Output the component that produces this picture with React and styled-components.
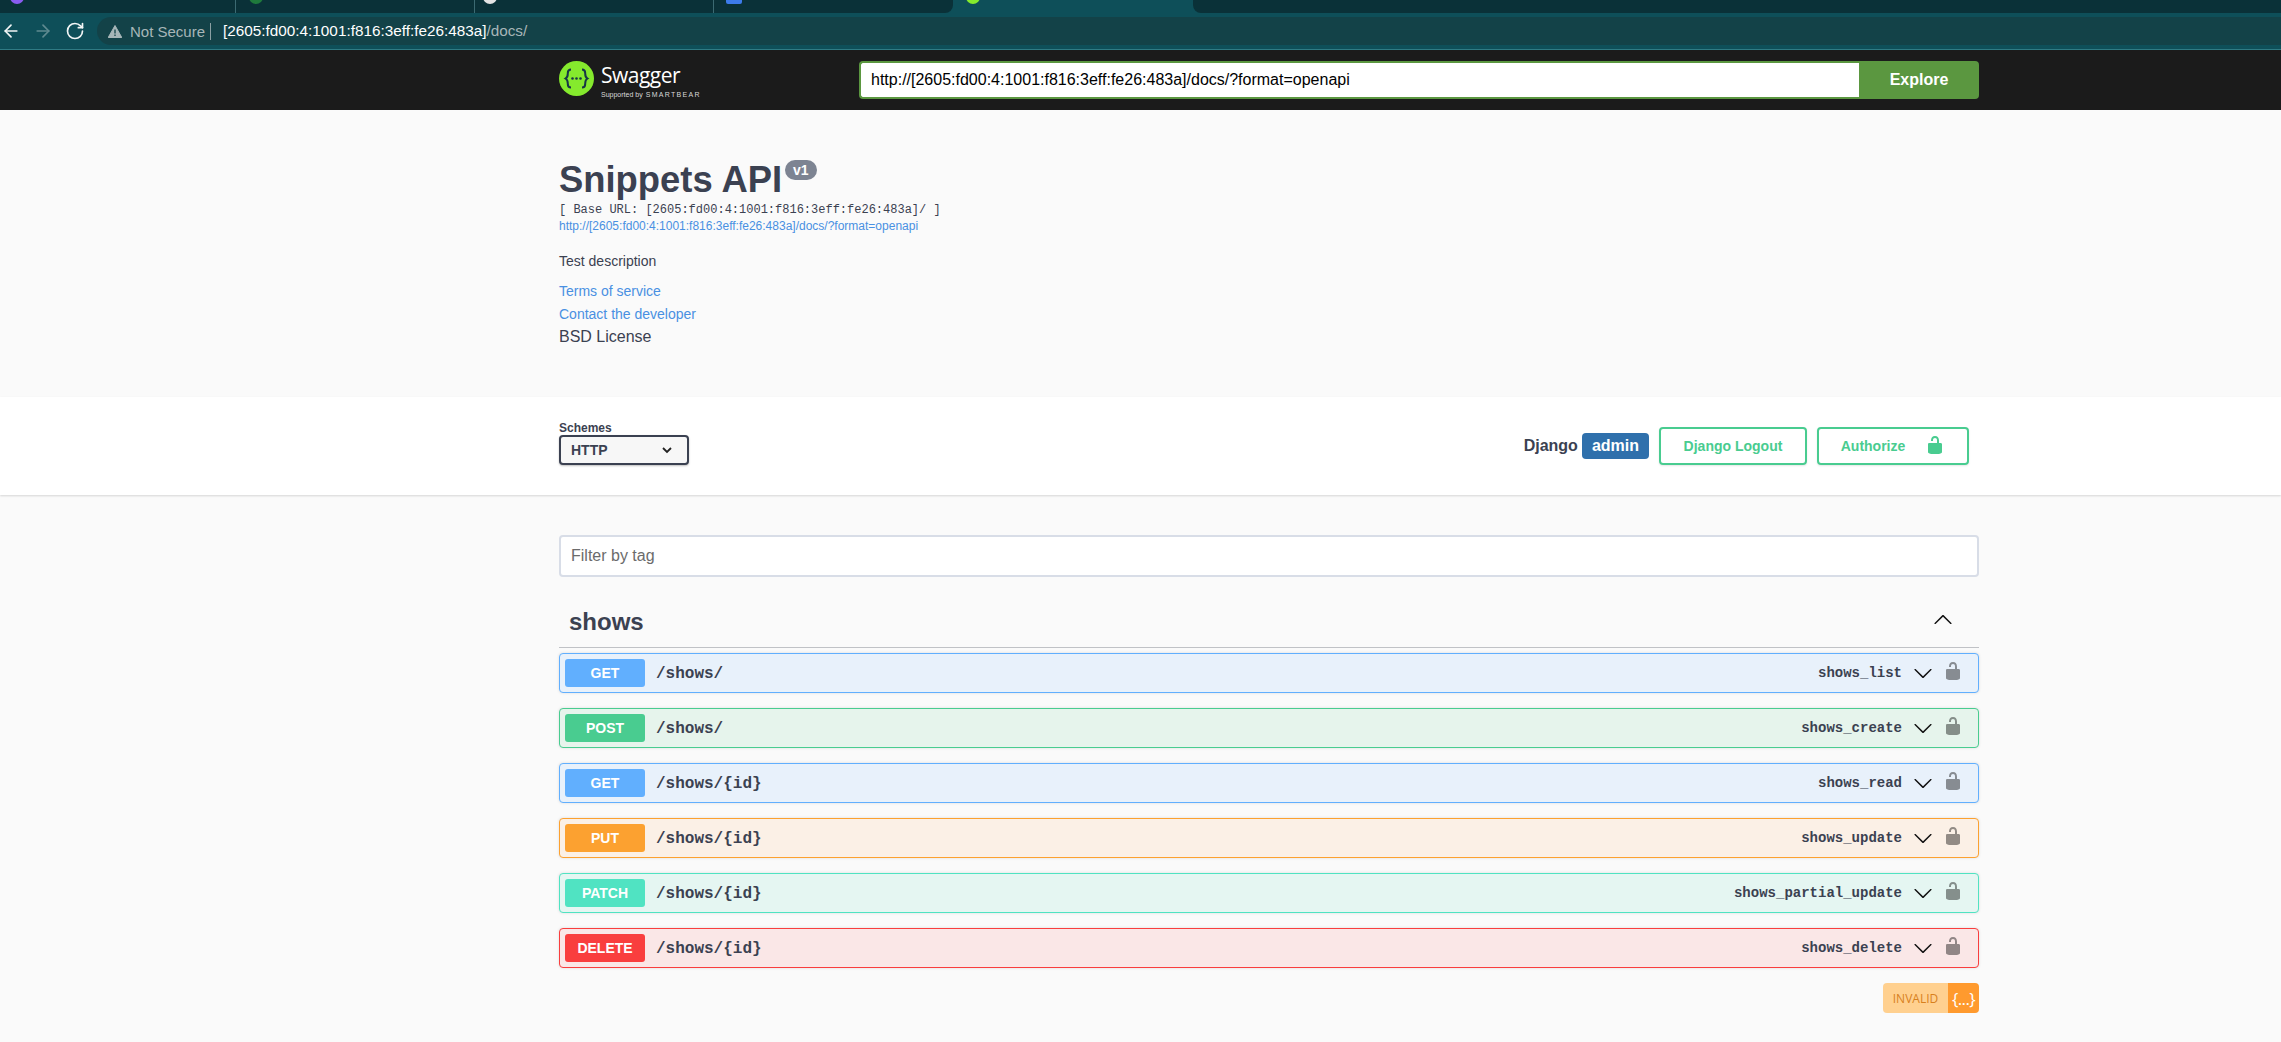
import styled, { createGlobalStyle } from 'styled-components'
import { ArrowLeft, ArrowRight, RotateCw } from 'lucide-react'

const GlobalStyle = createGlobalStyle`
  html, body {
    margin: 0;
    padding: 0;
    background: #fafafa;
    font-family: "Liberation Sans", Arial, sans-serif;
    color: #3b4151;
  }
`

const Page = styled.div`
  width: 2281px;
  height: 1042px;
  overflow: hidden;
  display: flex;
  flex-direction: column;
`

const TabStrip = styled.div`
  height: 17px;
  background: #0e4f59;
  display: flex;
  flex: none;
`
const TabGroup = styled.div`
  width: ${(p) => p.$width}px;
  height: 13px;
  background: #0a3138;
  border-radius: ${(p) => (p.$side === 'left' ? '0 0 8px 0' : '0 0 0 8px')};
  display: flex;
  flex: none;
`
const ActiveTab = styled.div`
  width: 240px;
  flex: none;
  padding-left: 13px;
  height: 13px;
  overflow: hidden;
  box-sizing: border-box;
`
const Tab = styled.div`
  width: ${(p) => p.$width}px;
  height: 13px;
  flex: none;
  box-sizing: border-box;
  padding-left: ${(p) => p.$pad}px;
  border-right: ${(p) => (p.$last ? 'none' : '1px solid #3c6a72')};
  overflow: hidden;
`
const Favicon = styled.span`
  display: block;
  width: ${(p) => (p.$square ? 16 : 14)}px;
  height: ${(p) => (p.$square ? 11 : 14)}px;
  margin-top: ${(p) => (p.$square ? -7 : -10)}px;
  border-radius: ${(p) => (p.$square ? '2px' : '50%')};
  background: ${(p) => p.$color};
`
const BrowserBar = styled.div`
  height: 32px;
  flex: none;
  background: #0e4f59;
  border-bottom: 1px solid #2f7b84;
  display: flex;
  align-items: flex-start;
`
const NavIcons = styled.div`
  display: flex;
  align-items: center;
  gap: 12px;
  padding-left: 1px;
  width: 96px;
  height: 28px;
  flex: none;
  color: #f2f6f6;
`
const ForwardIcon = styled(ArrowRight)`
  color: #5f8a90;
`
const Omnibox = styled.div`
  flex: 1;
  height: 28px;
  background: #134248;
  border-radius: 14px 0 0 14px;
  display: flex;
  align-items: center;
  padding-left: 11px;
`
const NotSecure = styled.span`
  color: #a7b6b8;
  font-size: 15px;
  margin-left: 8px;
  padding-right: 5px;
  border-right: 1px solid #8ba0a3;
  line-height: 17px;
`
const Host = styled.span`
  color: #ffffff;
  font-size: 15.300px;
  margin-left: 12px;
`
const Path = styled.span`
  color: #a7b6b8;
  font-size: 15.300px;
`

const TopBar = styled.div`
  height: 60px;
  flex: none;
  background: #1b1b1b;
`
const Wrapper = styled.div`
  width: 1420px;
  margin-left: 559px;
`
const TopInner = styled(Wrapper)`
  height: 60px;
  display: flex;
  align-items: center;
`
const Logo = styled.div`
  width: 300px;
  flex: none;
  align-self: flex-start;
  margin-top: 11px;
  display: flex;
  align-items: flex-start;
  gap: 7px;
`
const LogoText = styled.div`
  display: flex;
  flex-direction: column;
  color: #ffffff;
  margin-top: 2px;
`
const LogoWord = styled.span`
  font-family: "Open Sans", sans-serif;
  font-size: 21px;
  line-height: 25px;
  letter-spacing: -0.5px;
`
const LogoSub = styled.span`
  font-size: 7px;
  line-height: 9px;
  margin-top: 2px;
  color: #d8d8d8;
  white-space: nowrap;
  b {
    font-size: 7px;
    font-weight: 400;
    letter-spacing: 1.300px;
    margin-left: 3px;
  }
`
const UrlForm = styled.div`
  flex: 1;
  height: 38px;
  display: flex;
`
const UrlInput = styled.div`
  flex: 1;
  box-sizing: border-box;
  background: #ffffff;
  border: 2px solid #5b9740;
  border-right: none;
  border-radius: 4px 0 0 4px;
  font-size: 16px;
  color: #000000;
  display: flex;
  align-items: center;
  padding-left: 10px;
`
const ExploreButton = styled.div`
  width: 120px;
  flex: none;
  background: #5b9740;
  border-radius: 0 4px 4px 0;
  color: #ffffff;
  font-size: 16px;
  font-weight: 700;
  display: flex;
  align-items: center;
  justify-content: center;
`

const Info = styled(Wrapper)`
  height: 287px;
  flex: none;
  box-sizing: border-box;
  padding-top: 47px;
`
const Title = styled.h2`
  margin: 0;
  font-size: 36.400px;
  line-height: 46px;
  font-weight: 700;
  position: relative;
  display: inline-block;
`
const Version = styled.span`
  position: absolute;
  left: 226px;
  top: 3px;
  background: #7d8492;
  color: #ffffff;
  font-size: 14px;
  line-height: 20px;
  height: 20px;
  padding: 0 8px;
  border-radius: 10px;
`
const BaseUrl = styled.pre`
  margin: 0;
  font-family: "Liberation Mono", monospace;
  font-size: 12px;
  line-height: 14px;
  color: #3b4151;
`
const SmallLink = styled.div`
  font-size: 12px;
  line-height: 18px;
  color: #4990e2;
`
const Description = styled.p`
  margin: 17px 0 0;
  font-size: 14px;
  line-height: 18px;
`
const InfoLink = styled.div`
  font-size: 14px;
  line-height: 23px;
  color: #4990e2;
  margin-top: ${(p) => p.$top || 0}px;
`
const License = styled.div`
  font-size: 16px;
  line-height: 22px;
  color: #3b4151;
`

const SchemeBar = styled.div`
  height: 98px;
  flex: none;
  background: #ffffff;
  box-shadow: 0 1px 2px rgba(0, 0, 0, 0.15);
  position: relative;
`
const SchemeInner = styled(Wrapper)`
  height: 98px;
  box-sizing: border-box;
  padding: 24px 10px 0 0;
  display: flex;
  justify-content: space-between;
`
const SchemeCol = styled.div`
  display: flex;
  flex-direction: column;
`
const SchemeLabel = styled.span`
  font-size: 12px;
  line-height: 14px;
  font-weight: 700;
`
const SchemeSelect = styled.div`
  width: 130px;
  height: 30px;
  box-sizing: border-box;
  border: 2px solid #3b4151;
  border-radius: 4px;
  background: #f7f7f7;
  box-shadow: 0 1px 2px rgba(0, 0, 0, 0.25);
  font-size: 14px;
  font-weight: 700;
  display: flex;
  align-items: center;
  justify-content: space-between;
  padding: 0 15px 0 10px;
`
const AuthRow = styled.div`
  display: flex;
  align-items: center;
  margin-top: 6px;
  height: 38px;
`
const DjangoLabel = styled.span`
  font-size: 16px;
  font-weight: 700;
  margin-right: 4px;
`
const AdminBadge = styled.span`
  background: #2f70ac;
  color: #ffffff;
  border-radius: 4px;
  font-size: 16px;
  font-weight: 700;
  height: 26px;
  line-height: 26px;
  padding: 0 10px;
  margin-right: 10px;
`
const AuthButton = styled.div`
  height: 38px;
  width: ${(p) => p.$width}px;
  box-sizing: border-box;
  border: 2px solid #49cc90;
  border-radius: 4px;
  box-shadow: 0 1px 2px rgba(0, 0, 0, 0.1);
  color: #49cc90;
  font-size: 14px;
  font-weight: 700;
  display: flex;
  align-items: center;
  justify-content: center;
  gap: 20px;
  margin-left: ${(p) => p.$left || 0}px;
`

const Content = styled(Wrapper)`
  flex: 1;
`
const FilterInput = styled.div`
  margin-top: 40px;
  height: 42px;
  box-sizing: border-box;
  border: 2px solid #d8dde7;
  border-radius: 4px;
  background: #ffffff;
  display: flex;
  align-items: center;
  padding-left: 10px;
  font-size: 16px;
  color: #6b6b6b;
`
const TagHeader = styled.div`
  height: 56px;
  margin-top: 15px;
  box-sizing: border-box;
  border-bottom: 1px solid rgba(59, 65, 81, 0.3);
  display: flex;
  align-items: center;
  justify-content: space-between;
  padding: 0 26px 0 10px;
`
const TagName = styled.h3`
  margin: 5px 0 0;
  font-size: 24px;
  font-weight: 700;
`
const OpList = styled.div`
  display: flex;
  flex-direction: column;
  gap: 15px;
  margin-top: 5px;
`
const OpRow = styled.div`
  height: 40px;
  box-sizing: border-box;
  border: 1px solid ${(p) => p.$color};
  border-radius: 4px;
  background: ${(p) => p.$bg};
  box-shadow: 0 0 3px rgba(0, 0, 0, 0.12);
  display: flex;
  align-items: center;
  padding: 0 15px 0 5px;
`
const MethodBadge = styled.span`
  width: 80px;
  height: 28px;
  flex: none;
  background: ${(p) => p.$color};
  border-radius: 3px;
  color: #ffffff;
  font-size: 14px;
  font-weight: 700;
  display: flex;
  align-items: center;
  justify-content: center;
`
const OpPath = styled.span`
  font-family: "Liberation Mono", monospace;
  font-size: 16px;
  font-weight: 700;
  margin-left: 11px;
  padding-top: 2px;
  flex: 1;
`
const OpId = styled.span`
  font-family: "Liberation Mono", monospace;
  font-size: 14px;
  font-weight: 700;
`
const ArrowSlot = styled.span`
  display: flex;
  margin: 0 10px 0 11px;
`
const BadgeRow = styled.div`
  display: flex;
  justify-content: flex-end;
  margin-top: 15px;
`
const Invalid = styled.div`
  height: 30px;
  display: flex;
  border-radius: 4px;
  overflow: hidden;
`
const InvalidLabel = styled.span`
  width: 65px;
  background: #ffd08f;
  color: #d8801d;
  font-family: "Open Sans", sans-serif;
  font-size: 12px;
  display: flex;
  align-items: center;
  justify-content: center;
`
const InvalidIcon = styled.span`
  width: 31px;
  background: #ff9a2e;
  color: #ffffff;
  font-family: "Open Sans", sans-serif;
  font-size: 17px;
  letter-spacing: -0.6px;
  display: flex;
  align-items: center;
  justify-content: center;
`
const LockSvg = styled.svg`
  flex: none;
  margin-bottom: ${(p) => p.$lift}px;
`

const ARROW_PATH =
  'M17.418 6.109c.272-.268.709-.268.979 0s.271.701 0 .969l-7.908 7.83c-.27.268-.707.268-.979 0l-7.908-7.83c-.27-.268-.27-.701 0-.969.271-.268.709-.268.979 0L10 13.25l7.418-7.141z'

const LOCK_PATH =
  'M15.8 8H14V5.6C14 2.703 12.665 1 10 1 7.334 1 6 2.703 6 5.6V6h2v-.801C8 3.754 8.797 3 10 3c1.203 0 2 .754 2 2.199V8H4c-.553 0-1 .646-1 1.199V17c0 .549.428 1.139.951 1.307l1.197.387C5.672 18.861 6.55 19 7.1 19h5.8c.549 0 1.428-.139 1.951-.307l1.196-.387c.524-.167.953-.757.953-1.306V9.199C17 8.646 16.352 8 15.8 8z'

const Lock = ({ color, lift = 0 }) => (
  <LockSvg width="20" height="20" viewBox="0 0 20 20" fill={color} $lift={lift}>
    <path d={LOCK_PATH} />
  </LockSvg>
)

const Chevron = ({ up }) => (
  <svg width="20" height="20" viewBox="0 0 20 20" fill="#111">
    <path d={ARROW_PATH} transform={up ? 'rotate(180 10 10)' : undefined} />
  </svg>
)

const SmallChevron = () => (
  <svg width="10" height="7" viewBox="0 0 10 7" fill="none" stroke="#222" strokeWidth="1.8">
    <path d="M1 1l4 4 4-4" />
  </svg>
)

const WarningIcon = () => (
  <svg width="14" height="13" viewBox="0 0 14 13">
    <path d="M7 .5l6.800 12H.2z" fill="#a7b6b8" stroke="#a7b6b8" strokeLinejoin="round" />
    <path d="M7 4.500v4M7 9.600v1.300" stroke="#134248" strokeWidth="1.300" />
  </svg>
)

const LogoMark = () => (
  <svg width="35" height="35" viewBox="0 0 35 35">
    <circle cx="17.5" cy="17.5" r="17.5" fill="#85ea2d" />
    <path
      d="M12 8.5c-3 0-3.200 1.600-3.200 3.600 0 2.400.1 4-2.300 5.400 2.400 1.400 2.300 3 2.300 5.400 0 2 .2 3.600 3.200 3.600M23 8.500c3 0 3.200 1.600 3.200 3.600 0 2.400-.1 4 2.300 5.400-2.400 1.400-2.300 3-2.300 5.400 0 2-.2 3.600-3.200 3.600"
      fill="none"
      stroke="#173647"
      strokeWidth="2"
    />
    <circle cx="13.500" cy="17.500" r="1.300" fill="#173647" />
    <circle cx="17.500" cy="17.500" r="1.300" fill="#173647" />
    <circle cx="21.500" cy="17.500" r="1.300" fill="#173647" />
  </svg>
)

const operations = [
  { method: 'GET', path: '/shows/', id: 'shows_list', color: '#61affe', bg: '#e8f1fb' },
  { method: 'POST', path: '/shows/', id: 'shows_create', color: '#49cc90', bg: '#e6f4ec' },
  { method: 'GET', path: '/shows/{id}', id: 'shows_read', color: '#61affe', bg: '#e8f1fb' },
  { method: 'PUT', path: '/shows/{id}', id: 'shows_update', color: '#fca130', bg: '#fbf0e6' },
  { method: 'PATCH', path: '/shows/{id}', id: 'shows_partial_update', color: '#50e3c2', bg: '#e5f6f2' },
  { method: 'DELETE', path: '/shows/{id}', id: 'shows_delete', color: '#f93e3e', bg: '#fae7e7' },
]

function App() {
  return (
    <Page>
      <GlobalStyle />
      <TabStrip>
        <TabGroup $width={953} $side="left">
          <Tab $width={236} $pad={10}><Favicon $color="#8a5cf0" /></Tab>
          <Tab $width={239} $pad={13}><Favicon $color="#1f7a3c" /></Tab>
          <Tab $width={239} $pad={8}><Favicon $color="#e4e4e4" /></Tab>
          <Tab $width={239} $pad={12} $last><Favicon $color="#3d7bea" $square /></Tab>
        </TabGroup>
        <ActiveTab><Favicon $color="#85ea2d" /></ActiveTab>
        <TabGroup $width={1088} $side="right" />
      </TabStrip>
      <BrowserBar>
        <NavIcons>
          <ArrowLeft size={20} />
          <ForwardIcon size={20} />
          <RotateCw size={20} />
        </NavIcons>
        <Omnibox>
          <WarningIcon />
          <NotSecure>Not Secure</NotSecure>
          <Host>[2605:fd00:4:1001:f816:3eff:fe26:483a]</Host>
          <Path>/docs/</Path>
        </Omnibox>
      </BrowserBar>
      <TopBar>
        <TopInner>
          <Logo>
            <LogoMark />
            <LogoText>
              <LogoWord>Swagger</LogoWord>
              <LogoSub>Supported by<b>SMARTBEAR</b></LogoSub>
            </LogoText>
          </Logo>
          <UrlForm>
            <UrlInput>http://[2605:fd00:4:1001:f816:3eff:fe26:483a]/docs/?format=openapi</UrlInput>
            <ExploreButton>Explore</ExploreButton>
          </UrlForm>
        </TopInner>
      </TopBar>
      <Info>
        <Title>
          Snippets API
          <Version>v1</Version>
        </Title>
        <BaseUrl>[ Base URL: [2605:fd00:4:1001:f816:3eff:fe26:483a]/ ]</BaseUrl>
        <SmallLink>http://[2605:fd00:4:1001:f816:3eff:fe26:483a]/docs/?format=openapi</SmallLink>
        <Description>Test description</Description>
        <InfoLink $top={10}>Terms of service</InfoLink>
        <InfoLink>Contact the developer</InfoLink>
        <License>BSD License</License>
      </Info>
      <SchemeBar>
        <SchemeInner>
          <SchemeCol>
            <SchemeLabel>Schemes</SchemeLabel>
            <SchemeSelect>
              HTTP
              <SmallChevron />
            </SchemeSelect>
          </SchemeCol>
          <AuthRow>
            <DjangoLabel>Django</DjangoLabel>
            <AdminBadge>admin</AdminBadge>
            <AuthButton $width={148}>Django Logout</AuthButton>
            <AuthButton $width={152} $left={10}>
              Authorize
              <Lock color="#49cc90" lift={2} />
            </AuthButton>
          </AuthRow>
        </SchemeInner>
      </SchemeBar>
      <Content>
        <FilterInput>Filter by tag</FilterInput>
        <TagHeader>
          <TagName>shows</TagName>
          <Chevron up />
        </TagHeader>
        <OpList>
          {operations.map((op) => (
            <OpRow key={op.id} $color={op.color} $bg={op.bg}>
              <MethodBadge $color={op.color}>{op.method}</MethodBadge>
              <OpPath>{op.path}</OpPath>
              <OpId>{op.id}</OpId>
              <ArrowSlot><Chevron /></ArrowSlot>
              <Lock color="rgba(0, 0, 0, 0.42)" lift={4} />
            </OpRow>
          ))}
        </OpList>
        <BadgeRow>
          <Invalid>
            <InvalidLabel>INVALID</InvalidLabel>
            <InvalidIcon>{'{...}'}</InvalidIcon>
          </Invalid>
        </BadgeRow>
      </Content>
    </Page>
  )
}

export default App
